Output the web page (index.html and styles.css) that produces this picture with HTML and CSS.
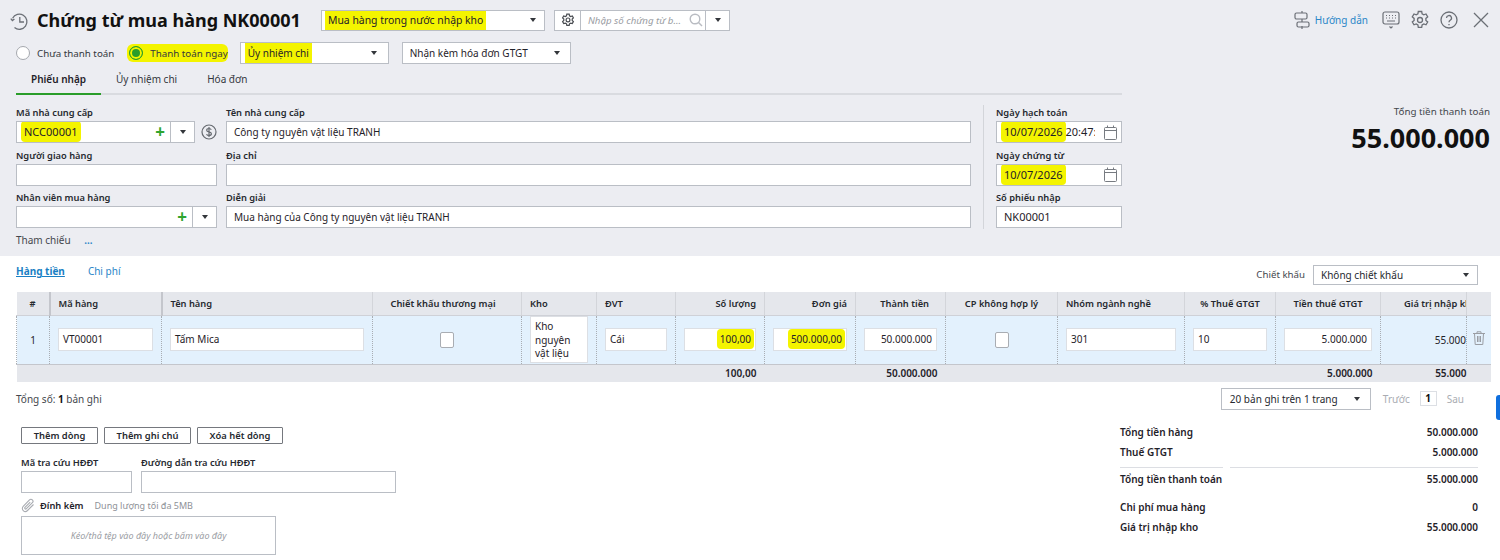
FILE: index.html
```html
<!DOCTYPE html>
<html lang="en">
<head>
    <meta charset="UTF-8">
    <meta name="viewport" content="width=device-width, initial-scale=1.0">
    <title>Chứng từ mua hàng</title>
    <link rel="stylesheet" href="styles.css">
</head>
<body>
    <div class="voucher-head">
        <div class="topbar">
            <svg class="history-icon" width="19" height="19" viewBox="0 0 19 19" fill="none" stroke="#6b6f76" stroke-width="1.3"><path d="M2.6 6.2A7.6 7.6 0 1 1 4.5 15.6"/><path d="M1.2 8.6l1.6 2 2-1.6" transform="translate(-.4 -2)"/><path d="M9.8 5v5h4.2"/></svg>
            <h1 class="title">Chứng từ mua hàng NK00001</h1>
            <div class="control select type-select"><span class="hl">Mua hàng trong nước nhập kho</span><i class="caret"></i></div>
            <div class="search-group">
                <span class="search-gear">
                    <svg width="14" height="14" viewBox="0 0 14 14" fill="none" stroke="#4a4d52" stroke-width="1.2"><path d="M5.8 1.3h2.4l.3 1.6 1.2.7 1.6-.5 1.1 2-1.2 1.1v1.400l1.2 1.1-1.100 2-1.600-.5-1.200.7-.3 1.600H5.800l-.3-1.600-1.200-.7-1.600.5-1.100-2 1.200-1.100V6.200L1.600 5.100l1.100-2 1.600.5 1.200-.7z" transform="translate(0 -.1)"/><circle cx="7" cy="6.900" r="1.900"/></svg>
                </span>
                <span class="search-input">Nhập số chứng từ b...
                    <svg width="14" height="14" viewBox="0 0 14 14" fill="none" stroke="#b9bcc2" stroke-width="1.400"><circle cx="6" cy="6" r="4.800"/><path d="M9.500 9.500l3.500 3.500"/></svg>
                </span>
                <span class="search-drop"><i class="caret"></i></span>
            </div>
            <div class="top-actions">
                <svg width="18" height="20" viewBox="0 0 18 20" fill="none" stroke="#6b6f76" stroke-width="1.200"><path d="M9 1v2M9 9v3M9 16v3"/><rect x="2" y="3" width="12" height="6" rx="1.500"/><rect x="4" y="12" width="12" height="5" rx="1.500"/></svg>
                <a class="guide-link">Hướng dẫn</a>
                <svg class="kb-icon" width="18" height="20" viewBox="0 0 18 20" fill="none" stroke="#6b6f76" stroke-width="1.200"><rect x="1" y="2" width="16" height="12" rx="2"/><path d="M4 5.500h1M7 5.500h1M10 5.500h1M13 5.500h1M4 8h1M7 8h1M10 8h1M13 8h1M5 11h8M7.500 16.500l1.500 1.500 1.500-1.500"/></svg>
                <svg width="20" height="20" viewBox="0 0 20 20" fill="none" stroke="#6b6f76" stroke-width="1.300"><path d="M8.300 1.500h3.400l.4 2.300 1.700 1 2.200-.8 1.700 2.900-1.800 1.500v2l1.800 1.500-1.700 2.900-2.200-.8-1.700 1-.4 2.300H8.300l-.4-2.300-1.700-1-2.200.8-1.700-2.900 1.800-1.500v-2L2.300 6.900 4 4l2.200.8 1.700-1z"/><circle cx="10" cy="10" r="2.500"/></svg>
                <svg width="18" height="18" viewBox="0 0 18 18" fill="none" stroke="#6b6f76" stroke-width="1.300"><circle cx="9" cy="9" r="8"/><path d="M6.500 7a2.500 2.500 0 1 1 3.700 2.200c-.8.500-1.200 1-1.200 2"/><path d="M9 13v1.200"/></svg>
                <svg class="close-icon" width="16" height="16" viewBox="0 0 16 16" fill="none" stroke="#6b6f76" stroke-width="1.300"><path d="M1 1l14 14M15 1L1 15"/></svg>
            </div>
        </div>

        <div class="pay-row">
            <label class="radio"><i class="radio-dot"></i>Chưa thanh toán</label>
            <label class="radio radio-on"><i class="radio-dot"></i>Thanh toán ngay</label>
            <div class="control select pay-select"><span class="hl">Ủy nhiệm chi</span><i class="caret"></i></div>
            <div class="control select invoice-select"><span>Nhận kèm hóa đơn GTGT</span><i class="caret"></i></div>
        </div>

        <div class="tabs">
            <span class="tab tab-active">Phiếu nhập</span>
            <span class="tab">Ủy nhiệm chi</span>
            <span class="tab">Hóa đơn</span>
        </div>

        <div class="form-wrap">
            <div class="form-main">
                <div class="field">
                    <div class="label">Mã nhà cung cấp</div>
                    <div class="supplier-line">
                        <div class="control combo supplier-combo"><span class="combo-text code"><span class="hl">NCC00001</span></span><span class="plus">+</span><span class="combo-drop"><i class="caret"></i></span></div>
                        <svg width="16" height="16" viewBox="0 0 16 16" fill="none" stroke="#666a70" stroke-width="1.200"><circle cx="8" cy="8" r="7"/><path d="M10.300 5.700C9.800 4.800 9 4.500 8 4.500c-1.300 0-2.300.7-2.300 1.700 0 2.300 4.700 1.200 4.700 3.600 0 1-1 1.700-2.400 1.700-1.100 0-2-.4-2.500-1.300M8 3v10"/></svg>
                    </div>
                </div>
                <div class="field"><div class="label">Tên nhà cung cấp</div><div class="control">Công ty nguyên vật liệu TRANH</div></div>
                <div class="field"><div class="label">Người giao hàng</div><div class="control"></div></div>
                <div class="field"><div class="label">Địa chỉ</div><div class="control"></div></div>
                <div class="field">
                    <div class="label">Nhân viên mua hàng</div>
                    <div class="control combo"><span class="combo-text"></span><span class="plus">+</span><span class="combo-drop"><i class="caret"></i></span></div>
                </div>
                <div class="field"><div class="label">Diễn giải</div><div class="control">Mua hàng của Công ty nguyên vật liệu TRANH</div></div>
                <div class="ref-line">Tham chiếu <a class="ref-more">...</a></div>
            </div>
            <div class="form-dates">
                <div class="field">
                    <div class="label">Ngày hạch toán</div>
                    <div class="control date"><span class="date-text code"><span class="hl">10/07/2026</span> 20:47:30</span>
                        <svg width="13" height="15" viewBox="0 0 13 15" fill="none" stroke="#777b81"><rect x=".5" y="2.500" width="12" height="12" rx="1"/><path d="M.5 5.500h12M3.500 .5v2M9.500 .5v2"/></svg>
                    </div>
                </div>
                <div class="field">
                    <div class="label">Ngày chứng từ</div>
                    <div class="control date"><span class="date-text code"><span class="hl">10/07/2026</span></span>
                        <svg width="13" height="15" viewBox="0 0 13 15" fill="none" stroke="#777b81"><rect x=".5" y="2.500" width="12" height="12" rx="1"/><path d="M.5 5.500h12M3.500 .5v2M9.500 .5v2"/></svg>
                    </div>
                </div>
                <div class="field"><div class="label">Số phiếu nhập</div><div class="control code">NK00001</div></div>
            </div>
            <div class="grand-total">
                <div class="grand-label">Tổng tiền thanh toán</div>
                <div class="grand-value">55.000.000</div>
            </div>
        </div>
    </div>

    <div class="detail">
        <div class="detail-tabs">
            <div class="links">
                <a class="link link-active">Hàng tiền</a>
                <a class="link">Chi phí</a>
            </div>
            <div class="discount">
                <span class="discount-label">Chiết khấu</span>
                <div class="control select discount-select"><span>Không chiết khấu</span><i class="caret"></i></div>
            </div>
        </div>

        <table class="grid">
            <colgroup>
                <col style="width:33px"><col style="width:112px"><col style="width:211px"><col style="width:149px"><col style="width:75px"><col style="width:79px"><col style="width:89px"><col style="width:91px"><col style="width:90px"><col style="width:112px"><col style="width:127px"><col style="width:91px"><col style="width:105px"><col style="width:86px"><col style="width:24px">
            </colgroup>
            <thead>
                <tr>
                    <th class="center strong-edge">#</th>
                    <th class="strong-edge">Mã hàng</th>
                    <th>Tên hàng</th>
                    <th class="center pad-right">Chiết khấu thương mại</th>
                    <th>Kho</th>
                    <th>ĐVT</th>
                    <th class="right">Số lượng</th>
                    <th class="right">Đơn giá</th>
                    <th class="right pad-right">Thành tiền</th>
                    <th class="center">CP không hợp lý</th>
                    <th>Nhóm ngành nghề</th>
                    <th class="center">% Thuế GTGT</th>
                    <th class="center">Tiền thuế GTGT</th>
                    <th class="clip">Giá trị nhập kho</th>
                    <th></th>
                </tr>
            </thead>
            <tbody>
                <tr>
                    <td class="center">1</td>
                    <td><div class="cell-input">VT00001</div></td>
                    <td><div class="cell-input">Tấm Mica</div></td>
                    <td class="center"><i class="check"></i></td>
                    <td class="kho-cell"><div class="kho-box">Kho nguyên vật liệu</div></td>
                    <td><div class="cell-input">Cái</div></td>
                    <td><div class="cell-input num"><span class="hl">100,00</span></div></td>
                    <td><div class="cell-input num"><span class="hl">500.000,00</span></div></td>
                    <td><div class="cell-input num">50.000.000</div></td>
                    <td class="center"><i class="check"></i></td>
                    <td><div class="cell-input">301</div></td>
                    <td><div class="cell-input">10</div></td>
                    <td><div class="cell-input num">5.000.000</div></td>
                    <td class="right value-cell">55.000</td>
                    <td class="center trash-cell">
                        <svg width="12" height="14" viewBox="0 0 12 14" fill="none" stroke="#9a9da3"><path d="M0 2.500h12M4 2.500V.8h4v1.700M1.500 2.500l.7 11h7.600l.7-11M4.500 5v6M6 5v6M7.500 5v6"/></svg>
                    </td>
                </tr>
            </tbody>
            <tfoot>
                <tr>
                    <td colspan="6"></td>
                    <td class="right">100,00</td>
                    <td></td>
                    <td class="right">50.000.000</td>
                    <td colspan="3"></td>
                    <td class="right">5.000.000</td>
                    <td class="right value-cell">55.000</td>
                    <td></td>
                </tr>
            </tfoot>
        </table>

        <div class="pager">
            <div>Tổng số: <b>1</b> bản ghi</div>
            <div class="pager-right">
                <div class="control select page-select"><span>20 bản ghi trên 1 trang</span><i class="caret"></i></div>
                <span class="page-off">Trước</span>
                <span class="page-num">1</span>
                <span class="page-off">Sau</span>
            </div>
        </div>

        <div class="bottom">
            <div class="bottom-left">
                <div class="buttons">
                    <button class="btn-add">Thêm dòng</button>
                    <button class="btn-note">Thêm ghi chú</button>
                    <button class="btn-clear">Xóa hết dòng</button>
                </div>
                <div class="lookup">
                    <div class="field lookup-code"><div class="label">Mã tra cứu HĐĐT</div><div class="control"></div></div>
                    <div class="field lookup-url"><div class="label">Đường dẫn tra cứu HĐĐT</div><div class="control"></div></div>
                </div>
                <div class="attach-line">
                    <svg width="14" height="15" viewBox="0 0 14 15" fill="none" stroke="#a9acb2" stroke-width="1.100"><path d="M12.500 6.500l-6 6a3 3 0 0 1-4.300-4.200l6.300-6.400a2 2 0 0 1 2.900 2.800l-6 6a.9.9 0 0 1-1.400-1.300l5.200-5.200"/></svg>
                    <b>Đính kèm</b>
                    <span class="attach-hint">Dung lượng tối đa 5MB</span>
                </div>
                <div class="dropzone">Kéo/thả tệp vào đây hoặc bấm vào đây</div>
            </div>
            <div class="summary">
                <div class="sum-row"><span>Tổng tiền hàng</span><span>50.000.000</span></div>
                <div class="sum-row"><span>Thuế GTGT</span><span>5.000.000</span></div>
                <div class="sum-rule"><i></i><i></i></div>
                <div class="sum-row"><span>Tổng tiền thanh toán</span><span>55.000.000</span></div>
                <div class="sum-row sum-gap"><span>Chi phí mua hàng</span><span>0</span></div>
                <div class="sum-row"><span>Giá trị nhập kho</span><span>55.000.000</span></div>
            </div>
        </div>
    </div>
    <div class="side-tab"></div>
</body>
</html>
```

FILE: styles.css
```css
* {
    box-sizing: border-box;
}
html, body {
    height: 560px;
    overflow: hidden;
}
body {
    margin: 0;
    background-color: #fff;
    color: #1f2229;
    font-family: "Noto Sans", "Open Sans", sans-serif;
    font-size: 10px;
    position: relative;
}

/* yellow marker strokes on the screenshot */
.hl {
    background-color: #f4f400;
    border-radius: 4px;
    padding: 3px 3px;
    margin: -3px -3px;
}

.voucher-head {
    background-color: #ecedf2;
    height: 256px;
    padding: 0 10px 0 16px;
}
.topbar {
    display: flex;
    align-items: center;
    height: 40px;
}
.history-icon {
    margin: 2px 8px 0 -6px;
    flex: none;
}
.title {
    margin: 0;
    font-size: 18px;
    font-weight: 700;
    color: #111;
    width: 284px;
    flex: none;
    white-space: nowrap;
    line-height: 26px;
}

.control {
    background-color: #fff;
    border: 1px solid #babec5;
    height: 22px;
    line-height: 20px;
    padding: 0 7px;
    white-space: nowrap;
    overflow: hidden;
}
.code {
    font-size: 11px;
}
.select {
    display: flex;
    justify-content: space-between;
    align-items: center;
}
.caret {
    display: inline-block;
    width: 0;
    height: 0;
    border-left: 3.5px solid transparent;
    border-right: 3.5px solid transparent;
    border-top: 4px solid #33363b;
}

.type-select {
    width: 224px;
    padding: 0 8px 0 6px;
    height: 21px;
    font-size: 10.4px;
}
.search-group {
    display: flex;
    margin-left: 9px;
    width: 176px;
    height: 21px;
    background-color: #fff;
    border: 1px solid #babec5;
    align-items: stretch;
}
.search-gear {
    width: 26px;
    border-right: 1px solid #babec5;
    display: flex;
    align-items: center;
    justify-content: center;
}
.search-input {
    width: 125px;
    padding: 0 2px 0 7px;
    display: flex;
    align-items: center;
    justify-content: space-between;
    font-size: 9.7px;
    font-style: italic;
    color: #9a9da3;
    border-right: 1px solid #babec5;
    white-space: nowrap;
}
.search-drop {
    flex: 1;
    display: flex;
    align-items: center;
    justify-content: center;
}
.top-actions {
    margin-left: auto;
    display: flex;
    align-items: center;
    gap: 10px;
}
.guide-link {
    color: #2a86c8;
    font-size: 10px;
    margin-left: -6px;
    margin-right: 4px;
}
.close-icon {
    margin-left: 5px;
    margin-right: 1px;
}

.pay-row {
    display: flex;
    align-items: center;
    height: 24px;
    margin-top: 1px;
}
.radio {
    display: flex;
    align-items: center;
    gap: 7px;
    color: #34373d;
    font-size: 9.75px;
    margin-right: 15px;
    white-space: nowrap;
}
.radio-dot {
    width: 14px;
    height: 14px;
    border-radius: 50%;
    border: 1px solid #a5a8ae;
    background-color: #fff;
}
.radio-on {
    margin-right: 12px;
    background-color: #f4f400;
    border-radius: 6px;
    padding: 2px 0 2px 2px;
    margin-left: -2px;
}
.radio-on .radio-dot {
    border-color: #2a9d2a;
    background-color: #2a9d2a;
    box-shadow: inset 0 0 0 2px #f4f400;
}
.pay-select {
    width: 149px;
    padding-right: 11px;
}
.invoice-select {
    width: 169px;
    margin-left: 13px;
    padding-right: 10px;
}

.tabs {
    display: flex;
    height: 30px;
    width: 1106px;
    border-bottom: 2px solid #d9dbe0;
}
.tab {
    height: 30px;
    line-height: 28px;
    padding: 0 15px;
    color: #34373d;
    border-bottom: 2px solid transparent;
    white-space: nowrap;
}
.tab-active {
    font-weight: 600;
    color: #1f2229;
    border-bottom-color: #2a9d2a;
}

.form-wrap {
    display: flex;
    margin-top: 10px;
}
.form-main {
    width: 955px;
    display: grid;
    grid-template-columns: 201px 745px;
    column-gap: 9px;
    grid-auto-rows: 42.5px;
}
.field .label {
    font-weight: 600;
    font-size: 9.3px;
    line-height: 16px;
    color: #26292f;
    white-space: nowrap;
}
.supplier-line {
    display: flex;
    align-items: center;
    gap: 6px;
}
.supplier-combo {
    width: 179px;
    flex: none;
}
.combo {
    display: flex;
    padding: 0 0 0 7px;
    align-items: center;
}
.combo-text {
    flex: 1;
}
.plus {
    color: #2fa52f;
    font-size: 17px;
    font-weight: 700;
    line-height: 20px;
    margin-right: 5px;
}
.combo-drop {
    width: 24px;
    height: 20px;
    border-left: 1px solid #babec5;
    display: flex;
    align-items: center;
    justify-content: center;
}
.ref-line {
    color: #44474d;
    grid-column: 1 / 3;
    line-height: 24px;
    margin-top: -5px;
}
.ref-more {
    color: #2a86c8;
    margin-left: 11px;
    font-weight: 600;
}

.form-dates {
    width: 139px;
    height: 124px;
    margin-left: 12px;
    padding-left: 12px;
    border-left: 1px solid #d3d5da;
    display: grid;
    grid-template-columns: minmax(0, 1fr);
    grid-auto-rows: 42.5px;
}
.date {
    display: flex;
    align-items: center;
    justify-content: space-between;
    padding: 0 4px 0 3px;
}
.date-text {
    width: 95px;
    padding-left: 4px;
    overflow: hidden;
}

.grand-total {
    flex: 1;
    text-align: right;
}
.grand-label {
    color: #44474d;
    font-size: 9.8px;
    line-height: 14px;
}
.grand-value {
    font-size: 27px;
    font-weight: 700;
    color: #111;
    line-height: 36px;
    margin-top: 1px;
}

.detail {
    padding: 0 10px 0 16px;
}
.detail-tabs {
    display: flex;
    justify-content: space-between;
    height: 36px;
    padding-top: 9px;
}
.links {
    display: flex;
    gap: 23px;
    line-height: 12px;
}
.link {
    color: #2a86c8;
}
.link-active {
    font-weight: 700;
    text-decoration: underline;
    color: #1a7fc4;
}
.discount {
    display: flex;
    gap: 8px;
    align-items: flex-start;
    line-height: 20px;
    color: #44474d;
    margin-right: 12px;
}
.discount-label {
    font-size: 9.7px;
}
.discount-select {
    width: 165px;
    height: 20px;
    line-height: 18px;
    padding-right: 8px;
    color: #26292f;
}

.grid {
    table-layout: fixed;
    width: 1474px;
    border-collapse: collapse;
}
.grid th {
    background-color: #e5e7ec;
    height: 23px;
    padding: 0 8px;
    font-size: 9.3px;
    font-weight: 600;
    text-align: left;
    white-space: nowrap;
    overflow: hidden;
    border-left: 1px solid #d3d5da;
    border-bottom: 1px solid #cfd1d7;
    color: #26292f;
}
.grid th:first-child {
    border-left: none;
}
.grid th.strong-edge {
    border-right: 2px solid #c4c6cc;
}
.grid th.clip {
    padding: 0 0 0 23px;
}
.grid th.pad-right {
    padding-right: 16px;
}
.grid .center {
    text-align: center;
}
.grid .right {
    text-align: right;
}
.grid tbody td {
    background-color: #e3f1fd;
    height: 49px;
    padding: 0 8px;
    border-left: 1px dotted #a9adb3;
    border-bottom: 1px solid #c4c6cc;
}
.grid tfoot td {
    background-color: #e5e7ec;
    height: 18px;
    padding: 0 8px;
    font-weight: 600;
}
.grid .value-cell,
.grid tbody td.value-cell {
    padding: 0;
}
.cell-input {
    background-color: #fff;
    border: 1px solid #dcdfe4;
    height: 23px;
    line-height: 21px;
    padding: 0 4px;
    white-space: nowrap;
    overflow: hidden;
}
.num {
    text-align: right;
}
.grid tbody td.kho-cell {
    padding: 0 8px;
}
.kho-box {
    background-color: #fff;
    border: 1px solid #dcdfe4;
    height: 47px;
    padding: 3px 4px;
    line-height: 13.5px;
    overflow: hidden;
}
.check {
    display: inline-block;
    width: 14px;
    height: 16px;
    background-color: #fff;
    border: 1px solid #a9adb3;
    border-radius: 2px;
    vertical-align: middle;
}
.grid tbody td.trash-cell {
    padding: 0;
}

.pager {
    display: flex;
    justify-content: space-between;
    align-items: center;
    height: 33px;
    color: #44474d;
}
.pager b {
    color: #111;
}
.pager-right {
    display: flex;
    align-items: center;
    padding-right: 26px;
}
.page-select {
    width: 150px;
    margin-right: 12px;
    padding: 0 10px 0 8px;
    color: #26292f;
}
.page-off {
    color: #a9acb2;
}
.page-num {
    width: 17px;
    height: 15px;
    line-height: 13px;
    text-align: center;
    border: 1px solid #dcdfe4;
    font-weight: 700;
    margin: 0 10px;
    color: #111;
}

.bottom {
    display: flex;
    justify-content: space-between;
    padding: 10px 12px 0 4px;
}
.buttons {
    display: flex;
    gap: 6px;
    margin-top: 2px;
}
button {
    height: 17px;
    padding: 0;
    background-color: #fff;
    border: 1px solid #75787e;
    border-radius: 1px;
    font-family: inherit;
    font-size: 9.4px;
    font-weight: 600;
    color: #26292f;
    line-height: 14px;
    cursor: pointer;
}
.btn-add {
    width: 77px;
}
.btn-note {
    width: 87px;
}
.btn-clear {
    width: 86px;
}
.bottom-left {
    padding-left: 1px;
}
.lookup {
    display: flex;
    gap: 9px;
    margin-top: 11px;
}
.lookup-code {
    width: 111px;
}
.lookup-url {
    width: 255px;
}
.attach-line {
    display: flex;
    align-items: center;
    gap: 5px;
    margin-top: 4px;
    height: 16px;
    font-size: 9.3px;
}
.attach-line b {
    font-weight: 600;
}
.attach-hint {
    color: #8e9197;
    font-size: 9px;
    margin-left: 6px;
}
.dropzone {
    width: 255px;
    height: 39px;
    margin-top: 3px;
    border: 1px solid #babec5;
    display: flex;
    align-items: center;
    justify-content: center;
    font-size: 9px;
    font-style: italic;
    color: #9a9da3;
}

.summary {
    width: 358px;
    font-weight: 600;
    margin-top: -3px;
}
.sum-row {
    display: flex;
    justify-content: space-between;
    height: 20px;
    line-height: 20px;
}
.sum-gap {
    margin-top: 8px;
}
.sum-rule {
    display: flex;
    gap: 7px;
    margin-top: 5px;
    margin-bottom: 1px;
}
.sum-rule i {
    display: block;
    height: 1px;
    background-color: #dcdee3;
    width: 103px;
}
.sum-rule i + i {
    flex: 1;
}

.side-tab {
    position: absolute;
    right: 0;
    top: 395px;
    width: 4px;
    height: 25px;
    background-color: #0f6fde;
    border-radius: 3px 0 0 3px;
}
```
